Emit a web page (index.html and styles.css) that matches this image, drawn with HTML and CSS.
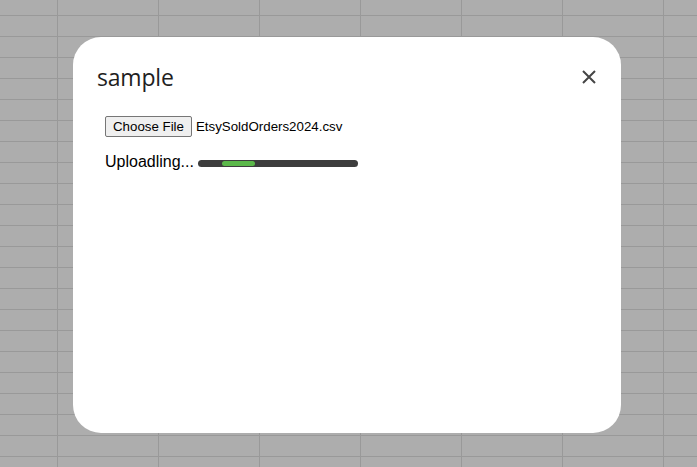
FILE: index.html
```html
<!DOCTYPE html>
<html>
<head>
<meta charset="utf-8">
<link rel="stylesheet" href="styles.css">
</head>
<body>
<div class="backdrop">
  <div class="dialog">
    <div class="dialog-header">
      <h1 class="dialog-title">sample</h1>
      <button class="close-btn" aria-label="Close">
        <svg width="14" height="14" viewBox="0 0 14 14"><path d="M1 1 L13 13 M13 1 L1 13" stroke="#454545" stroke-width="2" fill="none"/></svg>
      </button>
    </div>
    <div class="dialog-body">
      <div class="file-row">
        <span class="file-btn">Choose File</span>
        <span class="file-name">EtsySoldOrders2024.csv</span>
      </div>
      <div class="progress-row">
        <span class="progress-label">Uploadling...</span>
        <div class="progress-track"><div class="progress-fill"></div></div>
      </div>
    </div>
  </div>
</div>
</body>
</html>
```
FILE: styles.css
```css
html, body {
  margin: 0;
  padding: 0;
  height: 100%;
}
body {
  background-color: #adadad;
  background-image:
    linear-gradient(to right, #999 1px, transparent 1px),
    linear-gradient(to bottom, #999 1px, transparent 1px);
  background-size: 101px 21px;
  background-position: 57px 15px;
}
.backdrop {
  height: 100%;
  display: flex;
  align-items: flex-start;
  justify-content: center;
  padding-top: 37px;
  box-sizing: border-box;
}
.dialog {
  width: 548px;
  height: 396px;
  background: #fff;
  border-radius: 28px;
  margin-left: -3px;
  box-sizing: border-box;
}
.dialog-header {
  display: flex;
  align-items: center;
  justify-content: space-between;
  padding: 25px 25px 0 24px;
}
.dialog-title {
  margin: 0;
  font-family: "Open Sans", Roboto, sans-serif;
  font-weight: 400;
  font-size: 23px;
  line-height: 30px;
  color: #1f1f1f;
  letter-spacing: -0.2px;
}
.close-btn {
  border: none;
  background: none;
  padding: 0;
  width: 14px;
  height: 14px;
  display: flex;
}
.dialog-body {
  padding: 24px 32px 0 32px;
  font-family: "Liberation Sans", Arial, sans-serif;
}
.file-row {
  display: flex;
  align-items: center;
  height: 21px;
}
.file-btn {
  font-size: 13.3px;
  color: #000;
  background: #efefef;
  border: 1px solid #767676;
  border-radius: 2px;
  height: 19px;
  line-height: 19px;
  padding: 0 6px;
  box-sizing: content-box;
  width: 73px;
  text-align: center;
}
.file-name {
  font-size: 13.3px;
  margin-left: 4px;
  color: #000;
}
.progress-row {
  display: flex;
  align-items: center;
  margin-top: 15px;
  height: 20px;
}
.progress-label {
  font-size: 16px;
  color: #000;
}
.progress-track {
  margin-left: 4px;
  width: 160px;
  height: 7px;
  background: #3d3d3d;
  border-radius: 4px;
  position: relative;
  margin-top: 2px;
}
.progress-fill {
  position: absolute;
  left: 24px;
  top: 1px;
  width: 33px;
  height: 5px;
  background: #5bb84a;
  border-radius: 3px;
}
```
